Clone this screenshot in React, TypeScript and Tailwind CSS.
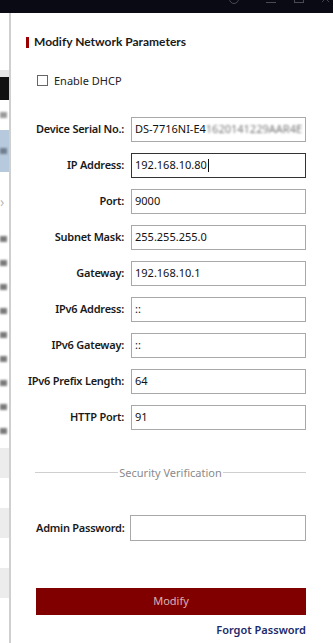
import React from "react";

const FONT = { fontFamily: '"Noto Sans", "Open Sans", Arial, sans-serif' };

interface Field {
  label: string;
  value: string;
  blurred?: string;
  focused?: boolean;
}

const fields: Field[] = [
  { label: "Device Serial No.:", value: "DS-7716NI-E4", blurred: "1620141229AAR4E" },
  { label: "IP Address:", value: "192.168.10.80", focused: true },
  { label: "Port:", value: "9000" },
  { label: "Subnet Mask:", value: "255.255.255.0" },
  { label: "Gateway:", value: "192.168.10.1" },
  { label: "IPv6 Address:", value: "::" },
  { label: "IPv6 Gateway:", value: "::" },
  { label: "IPv6 Prefix Length:", value: "64" },
  { label: "HTTP Port:", value: "91" },
];

function SideStrip() {
  return (
    <div className="flex w-[9px] shrink-0 flex-col bg-white">
      <div className="h-[57px]" />
      <div className="h-[7px] bg-[#e6e6e6]" />
      <div className="h-[23px] bg-[#111]" />
      <div className="flex h-[30px] items-center">
        <div className="h-[6px] w-[7px] bg-[#9a9a9a] blur-[1px]" />
      </div>
      <div className="flex h-[42px] items-center bg-[#b7cadd]">
        <div className="h-[6px] w-[7px] bg-[#6f7f90] blur-[1px]" />
      </div>
      <div className="flex h-[60px] items-center">
        <span className="text-[14px] leading-none text-[#bbb]">›</span>
      </div>
      <div className="flex flex-col gap-[18px] pt-[4px]">
        {[0, 1, 2, 3, 4, 5, 6, 7, 8].map((i) => (
          <div key={i} className="h-[6px] w-[7px] bg-[#7a7a7a] blur-[1px]" />
        ))}
      </div>
      <div className="mt-[14px] flex flex-col">
        {[0, 1, 2, 3, 4, 5].map((i) => (
          <div key={i} className={i % 2 === 0 ? "h-[30px] bg-[#ececec]" : "h-[30px] bg-white"} />
        ))}
      </div>
    </div>
  );
}

// window controls, mostly scrolled off the top of the shot
function TopBar() {
  return (
    <div className="flex h-[13px] shrink-0 items-start overflow-hidden bg-[#090a14] pl-[229px]">
      <div className="-mt-[6px] h-[10px] w-[10px] rounded-full border border-[#4a4a55]" />
      <div className="ml-[27px] mt-[2px] h-px w-[10px] bg-[#4a4a55]" />
      <div className="-mt-[6px] ml-[18px] h-[9px] w-[10px] border border-[#4a4a55]" />
      <div className="-mt-[6px] ml-[17px] h-[9px] w-[9px] text-[#4a4a55]">
        <svg viewBox="0 0 10 10" className="h-full w-full" stroke="currentColor" strokeWidth="1">
          <path d="M1 1 L9 9 M9 1 L1 9" />
        </svg>
      </div>
    </div>
  );
}

export default function App() {
  return (
    <div className="flex h-[643px] w-[333px] flex-col overflow-hidden bg-white" style={FONT}>
      <TopBar />
      <div className="flex min-h-0 flex-1">
        <SideStrip />
        <div className="w-[2px] shrink-0 bg-[#cfcfcf]" />
        <div className="flex min-w-0 flex-1 flex-col pl-[15px] pr-[27px]">
          <div className="mt-[23px] flex items-center gap-[5px]">
            <div className="h-[11px] w-[3px] bg-[#9b0000]" />
            <h2
              className="text-[12px] font-bold leading-none text-[#1a1a1a]"
              style={{ fontFamily: 'Lato, "Noto Sans", sans-serif' }}
            >
              Modify Network Parameters
            </h2>
          </div>

          <label className="mt-[27px] ml-[11px] flex items-center gap-[6px]">
            <span className="h-[11px] w-[11px] border border-[#666] bg-white" />
            <span className="text-[11px] leading-none text-[#222]">Enable DHCP</span>
          </label>

          <div className="mt-[31px] flex flex-col gap-[11px]">
            {fields.map((f) => (
              <div key={f.label} className="flex items-center">
                <span className="w-[105px] shrink-0 whitespace-nowrap pr-[7px] text-right text-[11px] font-semibold tracking-[-0.25px] text-[#1a1a1a]">
                  {f.label}
                </span>
                <div
                  className={
                    f.focused
                      ? "flex h-[25px] min-w-0 flex-1 items-center overflow-hidden border border-[#333] px-[3px] text-[11px] text-[#111]"
                      : "flex h-[25px] min-w-0 flex-1 items-center overflow-hidden border border-[#a8a8a8] px-[3px] text-[11px] text-[#111]"
                  }
                >
                  <span className="whitespace-nowrap">{f.value}</span>
                  {f.blurred && (
                    <span className="whitespace-nowrap text-[#777] blur-[1.2px]">{f.blurred}</span>
                  )}
                  {f.focused && <span className="ml-[1px] h-[13px] w-px shrink-0 bg-[#111]" />}
                </div>
              </div>
            ))}
          </div>

          <div className="mt-[37px] ml-[9px] flex items-center">
            <div className="h-px flex-1 bg-[#cfcfcf]" />
            <span className="px-[1px] text-[11px] leading-none text-[#8a8a8a]">Security Verification</span>
            <div className="h-px flex-1 bg-[#cfcfcf]" />
          </div>

          <div className="mt-[37px] flex items-center">
            <span className="ml-[10px] w-[94px] shrink-0 text-left text-[11px] font-semibold tracking-[-0.25px] text-[#1a1a1a]">
              Admin Password:
            </span>
            <div className="h-[26px] min-w-0 flex-1 border border-[#a8a8a8]" />
          </div>

          <button className="mt-[47px] ml-[10px] h-[27px] bg-[#800000] text-[11px] text-[#d8b4b4]">
            Modify
          </button>

          <div className="mt-[9px] text-right text-[11px] font-semibold leading-none text-[#1b2a6b]">
            Forgot Password
          </div>
        </div>
      </div>
    </div>
  );
}
